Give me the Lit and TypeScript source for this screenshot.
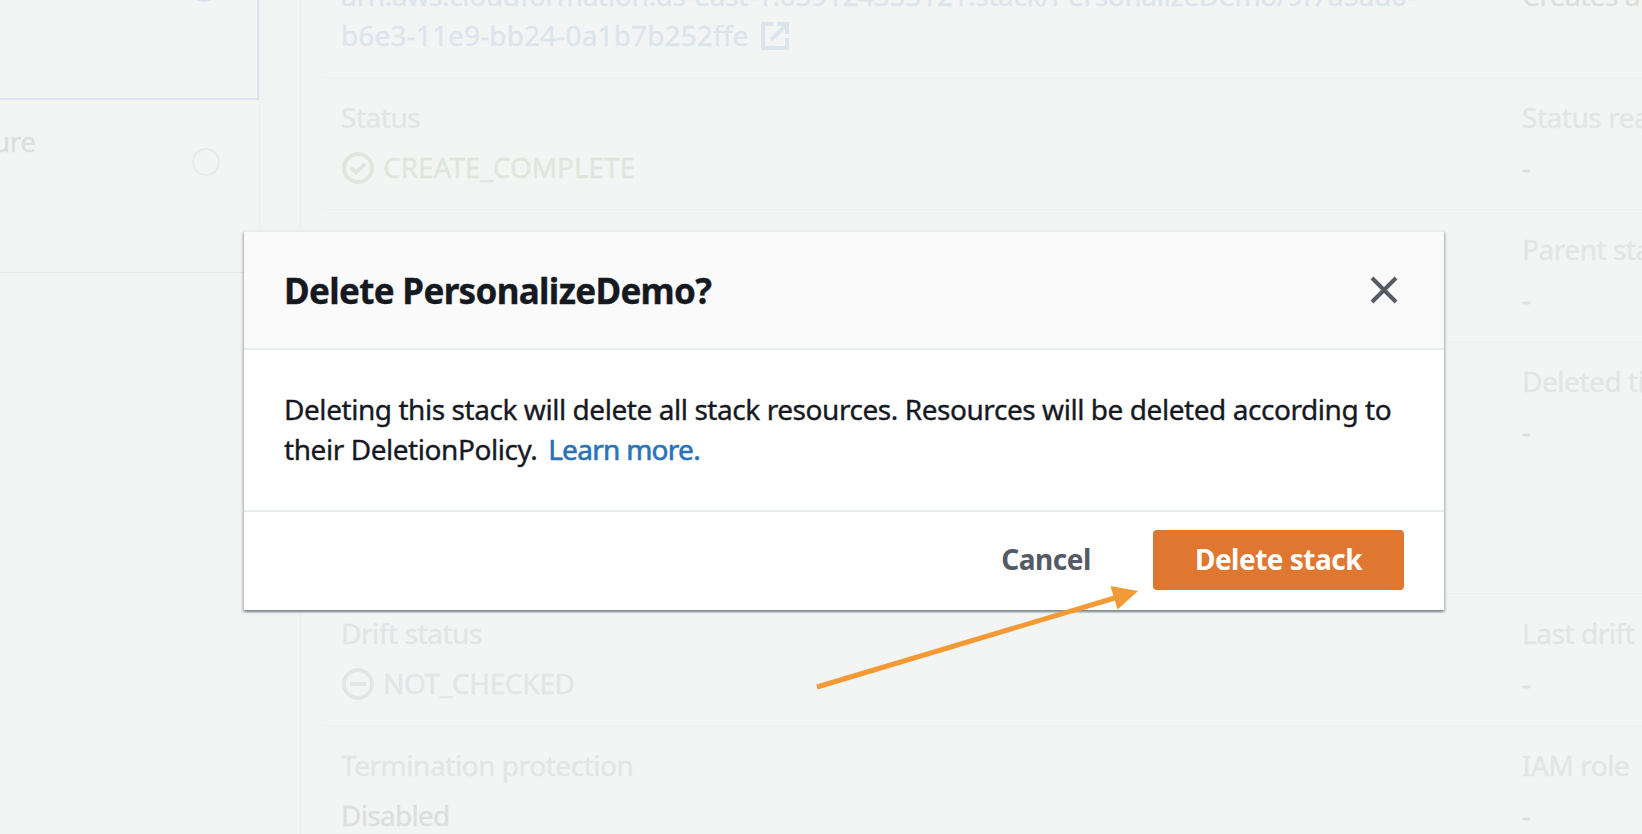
import { LitElement, html, css } from "lit";
import { customElement } from "lit/decorators.js";

@customElement("app-root")
export class AppRoot extends LitElement {
  static styles = css`
    :host {
      display: block;
      position: relative;
      width: 1642px;
      height: 834px;
      overflow: hidden;
      background: #f2f4f3;
      font: 400 28px/40px "Noto Sans", sans-serif;
      -webkit-text-stroke: 0.35px currentColor;
      letter-spacing: -0.5px;
      color: #dcdedf;
    }
    svg { display: block; flex: none; }
    .page { display: grid; grid-template-columns: 260px 1fr; column-gap: 40px; height: 834px; overflow: hidden; }
    .stacks { display: flex; flex-direction: column; height: 273px; box-sizing: border-box;
      background: #f3f5f4; border-right: 1px solid #edefef; border-bottom: 1px solid #e6e9e9; }
    .stack { display: flex; align-items: flex-start; justify-content: space-between; }
    .selected { height: 100px; box-sizing: border-box; border: solid #dce5ed; border-width: 0 2px 2px 0; }
    .other { padding-top: 21px; }
    .name { margin-left: -7px; }
    .radio-on { box-sizing: border-box; width: 28px; height: 28px; margin: -26px 39px 0 auto; border: 9px solid #d9e2ed; border-radius: 50%; }
    .radio { box-sizing: border-box; width: 28px; height: 28px; margin: 27px 39px 0 0; border: 2px solid #e9ebeb; border-radius: 50%; }
    .details { background: #f3f5f4; border-left: 1px solid #eceeee; padding-left: 20px; min-width: 0; }
    .row { display: grid; grid-template-columns: 1181px 200px; height: 132px; box-sizing: border-box;
      border-top: 1px solid #eff1f1; padding: 19px 0 0 20px; white-space: nowrap; }
    .row.first { height: 77px; border: 0; padding-top: 0; }
    .row.first > div { margin-top: -25px; }
    .row.tall { height: 252px; }
    .label { color: #e3e5e6; height: 50px; letter-spacing: -0.45px; }
    .value { display: flex; align-items: flex-start; gap: 10px; height: 40px; }
    .value svg { margin: 5px -1px 0 1px; }
    .ok { color: #dfe7dd; letter-spacing: -0.05px; }
    .na { color: #e3e5e6; letter-spacing: -0.35px; }
    .link { color: #dce5ed; }
    .arn { display: block; letter-spacing: -0.32px; }
    .arn.last { display: flex; gap: 12px; letter-spacing: 0.14px; }
    .arn svg { margin-top: 7px; }
    .disabled { letter-spacing: -0.7px; }
    .modal { position: absolute; left: 244px; top: 230px; width: 1200px; height: 380px; display: flex; flex-direction: column;
      background: #fff; color: #16191f;
      box-shadow: 0 2px 2px 0 rgba(0,28,36,.3), 2px 2px 2px 0 rgba(0,28,36,.15), -2px 2px 2px 0 rgba(0,28,36,.15); }
    .head { box-sizing: border-box; height: 120px; border: solid #eaeded; border-width: 2px 0; background: #fafafa;
      display: flex; align-items: center; justify-content: space-between; padding: 0 46px 0 40px; }
    .title { margin: 0; padding-top: 1px; font-size: 35px; line-height: 43px; font-weight: 700; letter-spacing: -0.67px; }
    .body { height: 160px; box-sizing: border-box; padding: 39px 0 0 40px; white-space: nowrap; letter-spacing: -0.44px; }
    .more { color: #2a73b8; letter-spacing: -0.72px; margin-left: 4px; -webkit-text-stroke-width: 0.6px; }
    .foot { height: 100px; box-sizing: border-box; border-top: 2px solid #eaeded; display: flex; align-items: flex-start; justify-content: flex-end; padding: 18px 40px 0 0; }
    button { box-sizing: border-box; height: 60px; font: 700 28px/40px "Noto Sans", sans-serif; border: 0; padding: 0 0 3px; background: none; color: #545b64; white-space: nowrap; letter-spacing: -0.5px; -webkit-text-stroke-width: 0; }
    .cancel { width: 90px; margin-right: 62px; }
    .primary { width: 251px; border-radius: 4px; background: #df7731; color: #fff; }
    .arrow { position: absolute; left: 800px; top: 570px; }
  `;

  private cell(label: string) {
    return html`<div><div class="label">${label}</div><div class="value">-</div></div>`;
  }

  render() {
    return html`
      <div class="page">
        <div class="stacks">
          <div class="stack selected"><span class="radio-on"></span></div>
          <div class="stack other"><span class="name">ure</span><span class="radio"></span></div>
        </div>
        <div class="details">
          <div class="row first">
            <div class="link">
              <span class="arn">arn:aws:cloudformation:us-east-1:059124353121:stack/PersonalizeDemo/9f7a5ad0-</span>
              <span class="arn last">b6e3-11e9-bb24-0a1b7b252ffe
                <svg width="28" height="28" viewBox="0 0 28 28" fill="none" stroke="currentColor" stroke-width="4"><path d="M12 2H2v24h24V16" stroke-linejoin="round"/><path d="M16 2h10v10M26 2L10 18"/></svg>
              </span>
            </div>
            <div>Creates an</div>
          </div>
          <div class="row">
            <div>
              <div class="label">Status</div>
              <div class="value ok">
                <svg width="32" height="32" viewBox="0 0 32 32" fill="none" stroke="currentColor" stroke-width="4"><circle cx="16" cy="16" r="14"/><path d="M9 15.500l5 5 9-8.500"/></svg>
                CREATE_COMPLETE
              </div>
            </div>
            ${this.cell("Status reason")}
          </div>
          <div class="row"><div></div>${this.cell("Parent stack")}</div>
          <div class="row tall"><div></div>${this.cell("Deleted time")}</div>
          <div class="row">
            <div>
              <div class="label">Drift status</div>
              <div class="value na">
                <svg width="32" height="32" viewBox="0 0 32 32" fill="none" stroke="currentColor" stroke-width="4"><circle cx="16" cy="16" r="14"/><path d="M8 16h16"/></svg>
                NOT_CHECKED
              </div>
            </div>
            ${this.cell("Last drift check")}
          </div>
          <div class="row">
            <div><div class="label">Termination protection</div><div class="value disabled">Disabled</div></div>
            ${this.cell("IAM role")}
          </div>
        </div>
      </div>
      <div class="modal">
        <div class="head">
          <h2 class="title">Delete PersonalizeDemo?</h2>
          <svg width="28" height="28" viewBox="0 0 28 28" fill="none" stroke="#545b64" stroke-width="4"><path d="M2 2l24 24M26 2L2 26"/></svg>
        </div>
        <div class="body">
          <div>Deleting this stack will delete all stack resources. Resources will be deleted according to</div>
          <div>their DeletionPolicy. <span class="more">Learn more.</span></div>
        </div>
        <div class="foot"><button class="cancel">Cancel</button><button class="primary">Delete stack</button></div>
      </div>
      <svg class="arrow" width="350" height="130" viewBox="800 570 350 130"><path d="M817 687L1118 597" stroke="#f39a37" stroke-width="5"/><path d="M1138 591L1110.500 586L1117.500 609.500Z" fill="#f39a37"/></svg>
    `;
  }
}
